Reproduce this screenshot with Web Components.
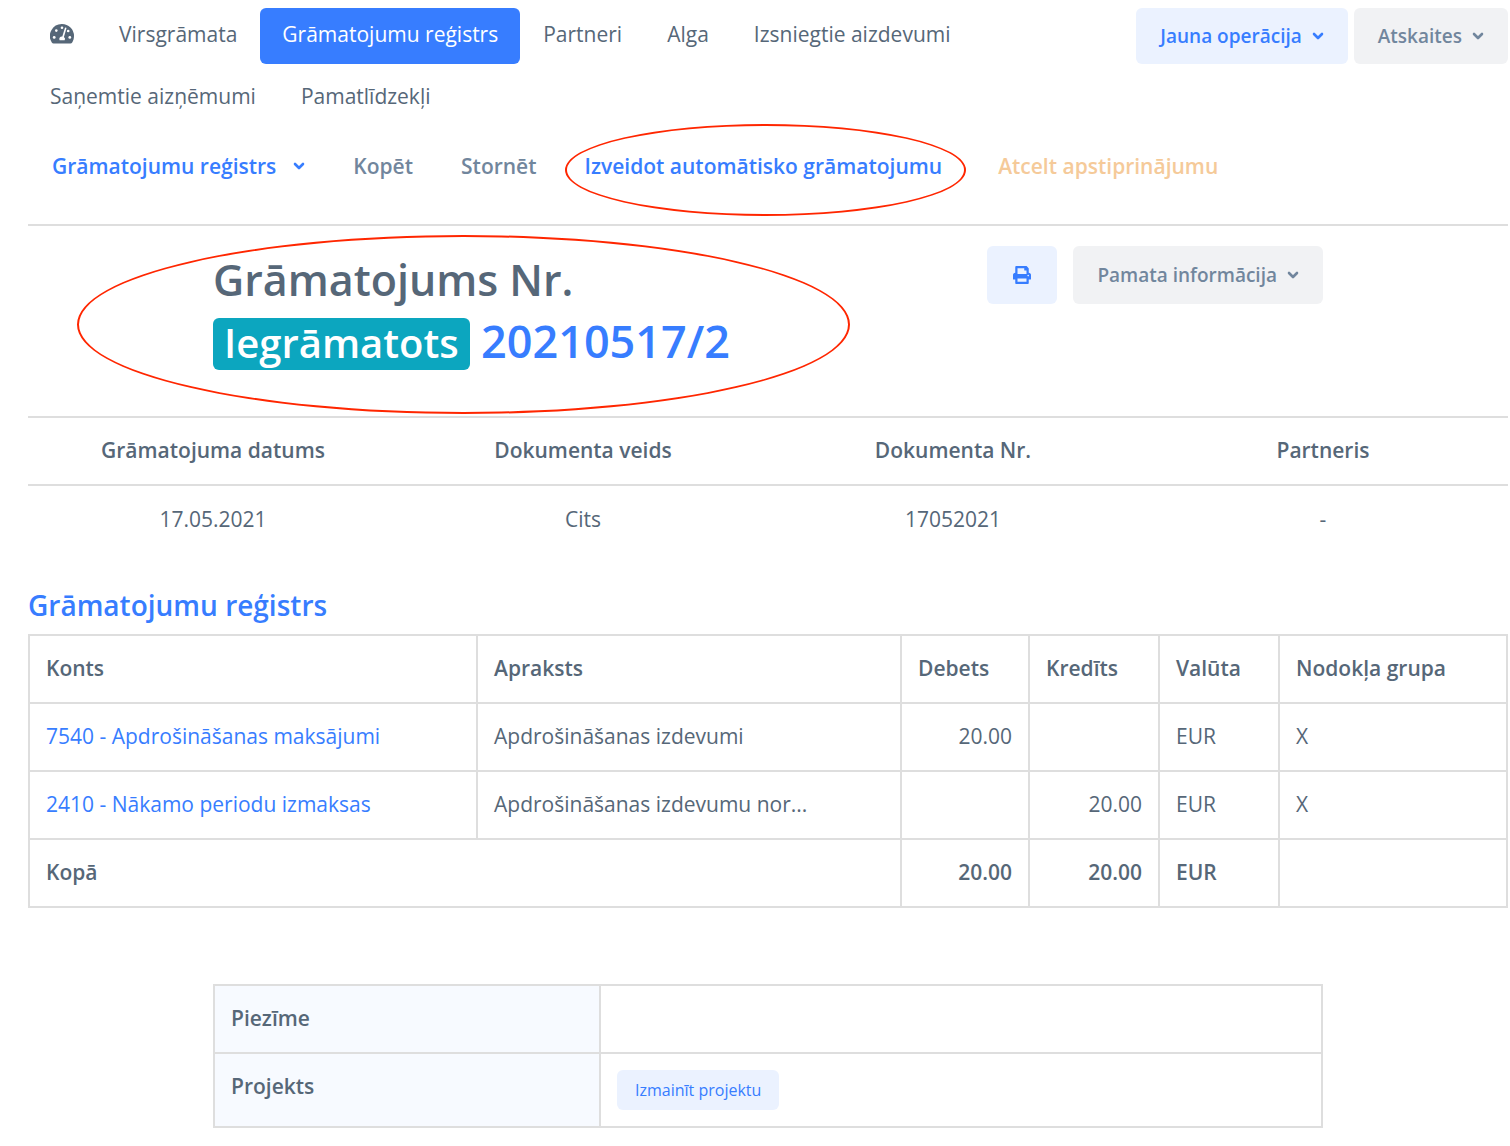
<!DOCTYPE html>
<html lang="lv">
<head>
  <meta charset="utf-8">
  <title>Grāmatojums Nr. 20210517/2</title>
  <style>
    body {
      margin: 0;
      padding: 8px 2px 16px 28px;
      background: #fff;
      color: #566778;
      font: 21px/32px "Open Sans", sans-serif;
      --blue: #377dff;
      --line: #dedede;
    }
  </style>
</head>
<body>
  <journal-page></journal-page>

  <script>
    class BaseElement extends HTMLElement {
      connectedCallback() {
        this.shadow = this.attachShadow({ mode: "open" });
        this.shadow.innerHTML = `<style>* { box-sizing: border-box; }${this.styles()}</style>${this.markup()}`;
      }
    }

    class AppIcon extends BaseElement {
      styles() {
        return `
          :host { display: inline-flex; }
          svg { display: block; fill: currentColor; }
        `;
      }

      markup() {
        const icons = {
          gauge: `<svg width="24" height="20" viewBox="0 0 24 20">
            <path d="M12 0a12 12 0 0 1 12 12c0 2.400-.600 4.600-1.800 6.500-.400.600-1 .9-1.700.9h-17c-.700 0-1.300-.3-1.700-.9A12 12 0 0 1 12 0z"/>
            <g fill="#fff">
              <circle cx="12" cy="3.800" r="1.300"/><circle cx="6.300" cy="6.600" r="1.300"/>
              <circle cx="4.200" cy="13.400" r="1.400"/><circle cx="19.800" cy="13.400" r="1.400"/><circle cx="18.200" cy="7" r="1.300"/>
              <path d="M14.900 3.900a.8.800 0 0 1 1.500.5l-2.500 8.600a2.600 2.600 0 0 1 .8 3.300H9.600a2.600 2.600 0 0 1 2.700-3.800z"/>
            </g></svg>`,
          chevron: `<svg width="12" height="8" viewBox="0 0 12 8">
            <path d="M2 2l4 4 4-4" fill="none" stroke="currentColor" stroke-width="2.600" stroke-linecap="round" stroke-linejoin="round"/></svg>`,
          printer: `<svg width="18" height="18" viewBox="0 0 512 512">
            <path d="M448 192V77.250c0-8.490-3.370-16.620-9.370-22.630L393.370 9.370c-6-6-14.140-9.370-22.630-9.370H96C78.330 0 64 14.330 64 32v160c-35.350 0-64 28.650-64 64v112c0 8.840 7.160 16 16 16h48v96c0 17.670 14.330 32 32 32h320c17.670 0 32-14.330 32-32v-96h48c8.840 0 16-7.160 16-16V256c0-35.350-28.650-64-64-64zm-64 256H128v-96h256v96zm0-224H128V64h192v48c0 8.840 7.160 16 16 16h48v96zm48 72c-13.250 0-24-10.750-24-24 0-13.260 10.750-24 24-24s24 10.740 24 24c0 13.250-10.750 24-24 24z"/></svg>`
        };
        return icons[this.getAttribute("name")];
      }
    }

    class NavLink extends BaseElement {
      styles() {
        return `
          :host { display: block; }
          a {
            display: flex;
            align-items: center;
            height: 56px;
            padding: 0 22px 4px;
            border-radius: 6px;
            color: inherit;
            text-decoration: none;
            white-space: nowrap;
          }
          :host([active]) a { background: var(--blue); color: #fff; }
        `;
      }

      markup() {
        const label = this.getAttribute("label");
        return `<a href="#"${label ? ` aria-label="${label}"` : ""}><slot></slot></a>`;
      }
    }

    class AppButton extends BaseElement {
      styles() {
        return `
          :host { display: inline-block; }
          button {
            display: flex;
            align-items: center;
            gap: 10px;
            height: 56px;
            padding: 0 24px;
            border: 0;
            border-radius: 6px;
            background: #f1f2f4;
            color: #71869d;
            font: 600 19px/28px "Open Sans", sans-serif;
            white-space: nowrap;
            cursor: pointer;
          }
          :host([color="primary"]) button { background: #ebf2ff; color: var(--blue); }
          :host([size="tall"]) button { height: 58px; }
          :host([label]) button { padding: 0 26px; }
          :host([size="small"]) button {
            height: 40px;
            padding: 0 18px;
            font-size: 16px;
            font-weight: 400;
          }
          :host([variant="text"]) button {
            gap: 17px;
            background: none;
            font-size: 21px;
          }
          :host([color="warning"]) button { color: #f5ca99; }
        `;
      }

      markup() {
        const caret = this.hasAttribute("caret") ? `<app-icon name="chevron"></app-icon>` : "";
        const label = this.getAttribute("label");
        return `<button type="button"${label ? ` aria-label="${label}"` : ""}><slot></slot>${caret}</button>`;
      }
    }

    // Red ring laid over whatever is slotted in
    class MarkRing extends BaseElement {
      styles() {
        return `
          :host { display: block; position: relative; }
          .ring {
            position: absolute;
            inset: var(--ring-inset);
            border: 2px solid #ff2600;
            border-radius: 50%;
            pointer-events: none;
          }
        `;
      }

      markup() {
        return `<slot></slot><div class="ring"></div>`;
      }
    }

    class TopNav extends BaseElement {
      styles() {
        return `
          :host { display: flex; align-items: flex-start; justify-content: space-between; }
          nav { display: flex; flex: 1; flex-wrap: wrap; gap: 6px 1px; max-width: 1000px; }
          .actions { display: flex; gap: 6px; }
        `;
      }

      markup() {
        return `
          <nav>
            <nav-link label="Sākums"><app-icon name="gauge"></app-icon></nav-link>
            <nav-link>Virsgrāmata</nav-link>
            <nav-link active>Grāmatojumu reģistrs</nav-link>
            <nav-link>Partneri</nav-link>
            <nav-link>Alga</nav-link>
            <nav-link>Izsniegtie aizdevumi</nav-link>
            <nav-link>Saņemtie aizņēmumi</nav-link>
            <nav-link>Pamatlīdzekļi</nav-link>
          </nav>
          <div class="actions">
            <app-button color="primary" caret>Jauna operācija</app-button>
            <app-button caret>Atskaites</app-button>
          </div>
        `;
      }
    }

    class EntryToolbar extends BaseElement {
      styles() {
        return `
          :host {
            display: flex;
            padding: 12px 0 30px;
            border-bottom: 2px solid var(--line);
          }
          mark-ring { margin-right: 8px; --ring-inset: -14px 0 -22px 4px; }
        `;
      }

      markup() {
        return `
          <app-button variant="text" color="primary" caret>Grāmatojumu reģistrs</app-button>
          <app-button variant="text">Kopēt</app-button>
          <app-button variant="text">Stornēt</app-button>
          <mark-ring>
            <app-button variant="text" color="primary">Izveidot automātisko grāmatojumu</app-button>
          </mark-ring>
          <app-button variant="text" color="warning">Atcelt apstiprinājumu</app-button>
        `;
      }
    }

    class EntryHeader extends BaseElement {
      styles() {
        return `
          :host {
            display: flex;
            justify-content: space-between;
            align-items: flex-start;
            padding: 20px 12.5% 38px;
          }
          mark-ring { width: 540px; --ring-inset: -11px -97px -36px -136px; }
          h1 { margin: 0; padding: 3px 0 5px; font-size: 43px; line-height: 62px; font-weight: 600; }
          .badge {
            display: inline-block;
            padding: 0 11px 2px;
            border-radius: 6px;
            background: #0ca6bf;
            color: #fff;
            font-size: 40px;
            line-height: 50px;
          }
          .number { color: var(--blue); font-size: 45px; line-height: 52px; }
          .actions { display: flex; gap: 16px; }
        `;
      }

      markup() {
        return `
          <mark-ring>
            <h1>Grāmatojums Nr.<br><span class="badge">Iegrāmatots</span> <span class="number">20210517/2</span></h1>
          </mark-ring>
          <div class="actions">
            <app-button size="tall" color="primary" label="Drukāt"><app-icon name="printer"></app-icon></app-button>
            <app-button size="tall" caret>Pamata informācija</app-button>
          </div>
        `;
      }
    }

    class EntrySummary extends BaseElement {
      styles() {
        return `
          :host { display: block; }
          table { width: 100%; border-collapse: collapse; table-layout: fixed; }
          th, td { height: 68px; padding: 0 16px 2px; text-align: center; font-weight: 400; }
          th { border: solid var(--line); border-width: 2px 0; font-weight: 600; }
        `;
      }

      markup() {
        return `
          <table>
            <thead>
              <tr><th>Grāmatojuma datums</th><th>Dokumenta veids</th><th>Dokumenta Nr.</th><th>Partneris</th></tr>
            </thead>
            <tbody>
              <tr><td>17.05.2021</td><td>Cits</td><td>17052021</td><td>-</td></tr>
            </tbody>
          </table>
        `;
      }
    }

    class EntryLines extends BaseElement {
      styles() {
        return `
          :host { display: block; padding-top: 32px; }
          h2 { margin: 0 0 9px; color: var(--blue); font-size: 28px; line-height: 40px; font-weight: 600; }
          table { width: 100%; border-collapse: collapse; table-layout: fixed; }
          th, td { height: 68px; padding: 0 16px 2px; border: 2px solid var(--line); text-align: left; }
          th { font-weight: 600; }
          a { color: var(--blue); text-decoration: none; }
          .amount { text-align: right; }
          tfoot td { font-weight: 600; }
        `;
      }

      markup() {
        const rows = [
          ["7540 - Apdrošināšanas maksājumi", "Apdrošināšanas izdevumi", "20.00", ""],
          ["2410 - Nākamo periodu izmaksas", "Apdrošināšanas izdevumu nor...", "", "20.00"]
        ];
        return `
          <h2>Grāmatojumu reģistrs</h2>
          <table>
            <colgroup>
              <col><col style="width: 424px"><col style="width: 128px">
              <col style="width: 130px"><col style="width: 120px"><col style="width: 228px">
            </colgroup>
            <thead>
              <tr><th>Konts</th><th>Apraksts</th><th>Debets</th><th>Kredīts</th><th>Valūta</th><th>Nodokļa grupa</th></tr>
            </thead>
            <tbody>
              ${rows.map(([account, text, debit, credit]) => `
                <tr>
                  <td><a href="#">${account}</a></td>
                  <td>${text}</td>
                  <td class="amount">${debit}</td>
                  <td class="amount">${credit}</td>
                  <td>EUR</td>
                  <td>X</td>
                </tr>`).join("")}
            </tbody>
            <tfoot>
              <tr><td colspan="2">Kopā</td><td class="amount">20.00</td><td class="amount">20.00</td><td>EUR</td><td></td></tr>
            </tfoot>
          </table>
        `;
      }
    }

    class EntryNotes extends BaseElement {
      styles() {
        return `
          :host { display: block; padding: 76px 12.5% 0; }
          table { width: 100%; border-collapse: collapse; table-layout: fixed; }
          th, td { height: 68px; padding: 16px; border: 2px solid var(--line); text-align: left; vertical-align: top; }
          th { width: 386px; background: #f7faff; font-weight: 600; }
          app-button { display: block; }
        `;
      }

      markup() {
        return `
          <table>
            <tbody>
              <tr><th scope="row">Piezīme</th><td></td></tr>
              <tr><th scope="row">Projekts</th><td><app-button size="small" color="primary">Izmainīt projektu</app-button></td></tr>
            </tbody>
          </table>
        `;
      }
    }

    class JournalPage extends BaseElement {
      styles() {
        return `:host { display: block; }`;
      }

      markup() {
        return `
          <top-nav></top-nav>
          <entry-toolbar></entry-toolbar>
          <entry-header></entry-header>
          <entry-summary></entry-summary>
          <entry-lines></entry-lines>
          <entry-notes></entry-notes>
        `;
      }
    }

    customElements.define("app-icon", AppIcon);
    customElements.define("nav-link", NavLink);
    customElements.define("app-button", AppButton);
    customElements.define("mark-ring", MarkRing);
    customElements.define("top-nav", TopNav);
    customElements.define("entry-toolbar", EntryToolbar);
    customElements.define("entry-header", EntryHeader);
    customElements.define("entry-summary", EntrySummary);
    customElements.define("entry-lines", EntryLines);
    customElements.define("entry-notes", EntryNotes);
    customElements.define("journal-page", JournalPage);
  </script>
</body>
</html>
